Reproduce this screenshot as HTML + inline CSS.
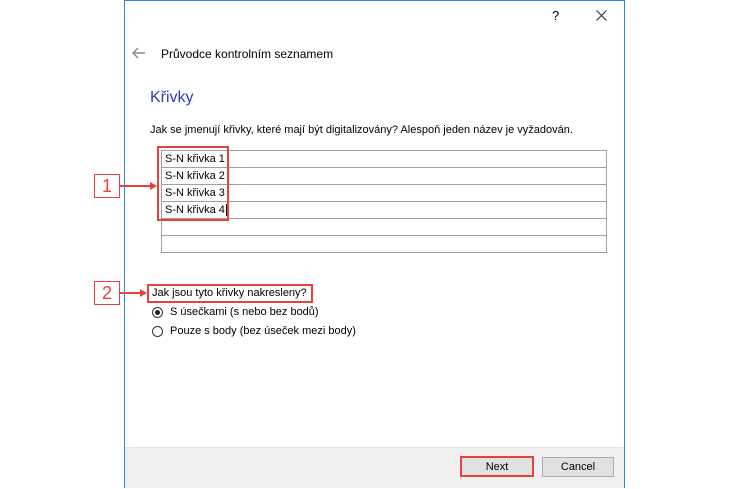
<!DOCTYPE html>
<html><head><meta charset="utf-8"><style>
body{margin:0;width:750px;height:489px;background:#fff;position:relative;overflow:hidden;font-family:"Liberation Sans",sans-serif;font-size:11px;color:#000}
.a{position:absolute}
.row{position:absolute;left:161px;width:446px;height:17px;border:1px solid #a0a0a0;border-top:none;box-sizing:border-box;padding-left:3px;line-height:16px}
.red{position:absolute;border:2px solid #e8423b;box-sizing:border-box}
.btn{position:absolute;top:457px;height:20px;width:72px;border:1px solid #adadad;background:#e1e1e1;box-sizing:border-box;text-align:center;line-height:18px}
.rad{position:absolute;width:11px;height:11px;border:1px solid #333;border-radius:50%;box-sizing:border-box;background:#fff}
</style></head><body>
<div class="a" style="left:124px;top:0;width:501px;height:488px;border:1px solid #2b8ae0;box-sizing:border-box"></div>
<div class="a" style="left:125px;top:447px;width:499px;height:40px;background:#f0f0f0;border-top:1px solid #e4e4e4"></div>
<div class="a" style="left:552px;top:8px;font-size:13px">?</div>
<svg class="a" style="left:596px;top:10px" width="11" height="11"><path d="M0.5 0.5L10.5 10.5M10.5 0.5L0.5 10.5" stroke="#333" stroke-width="1.1"/></svg>
<svg class="a" style="left:132px;top:47px" width="14" height="12"><path d="M1 6H13M6 1L1 6L6 11" stroke="#888" stroke-width="1.4" fill="none"/></svg>
<div class="a" style="left:161px;top:47px;font-size:12px">Průvodce kontrolním seznamem</div>
<div class="a" style="left:150px;top:89px;font-size:16px;color:#2a3fbd">Křivky</div>
<div class="a" style="left:150px;top:124px">Jak se jmenují křivky, které mají být digitalizovány? Alespoň jeden název je vyžadován.</div>
<div class="a" style="left:161px;top:150px;width:446px;border-top:1px solid #a0a0a0"></div>
<div class="row" style="top:151px">S-N křivka 1</div>
<div class="row" style="top:168px">S-N křivka 2</div>
<div class="row" style="top:185px">S-N křivka 3</div>
<div class="row" style="top:202px">S-N křivka 4<span style="border-left:1px solid #000;margin-left:1px"></span></div>
<div class="row" style="top:219px"></div>
<div class="row" style="top:236px"></div>
<div class="red" style="left:157px;top:146px;width:72px;height:75px"></div>
<div class="a" style="left:94px;top:174px;width:26px;height:24px;border:1px solid #e8423b;box-sizing:border-box;color:#e8423b;font-size:18px;text-align:center;line-height:22px">1</div>
<svg class="a" style="left:120px;top:181px" width="38" height="10"><path d="M0 5H31" stroke="#e8423b" stroke-width="2"/><path d="M30 1L37 5L30 9Z" fill="#e8423b"/></svg>
<div class="a" style="left:94px;top:281px;width:26px;height:24px;border:1px solid #e8423b;box-sizing:border-box;color:#e8423b;font-size:18px;text-align:center;line-height:22px">2</div>
<svg class="a" style="left:120px;top:288px" width="28" height="10"><path d="M0 5H21" stroke="#e8423b" stroke-width="2"/><path d="M20 1L27 5L20 9Z" fill="#e8423b"/></svg>
<div class="red" style="left:147px;top:284px;width:166px;height:19px"></div>
<div class="a" style="left:152px;top:287px">Jak jsou tyto křivky nakresleny?</div>
<div class="rad" style="left:152px;top:307px"><div style="margin:2px;width:5px;height:5px;border-radius:50%;background:#222"></div></div>
<div class="a" style="left:170px;top:306px">S úsečkami (s nebo bez bodů)</div>
<div class="rad" style="left:152px;top:326px"></div>
<div class="a" style="left:170px;top:325px">Pouze s body (bez úseček mezi body)</div>
<div class="btn" style="left:461px">Next</div>
<div class="red" style="left:460px;top:456px;width:74px;height:21px"></div>
<div class="btn" style="left:542px">Cancel</div>
</body></html>
